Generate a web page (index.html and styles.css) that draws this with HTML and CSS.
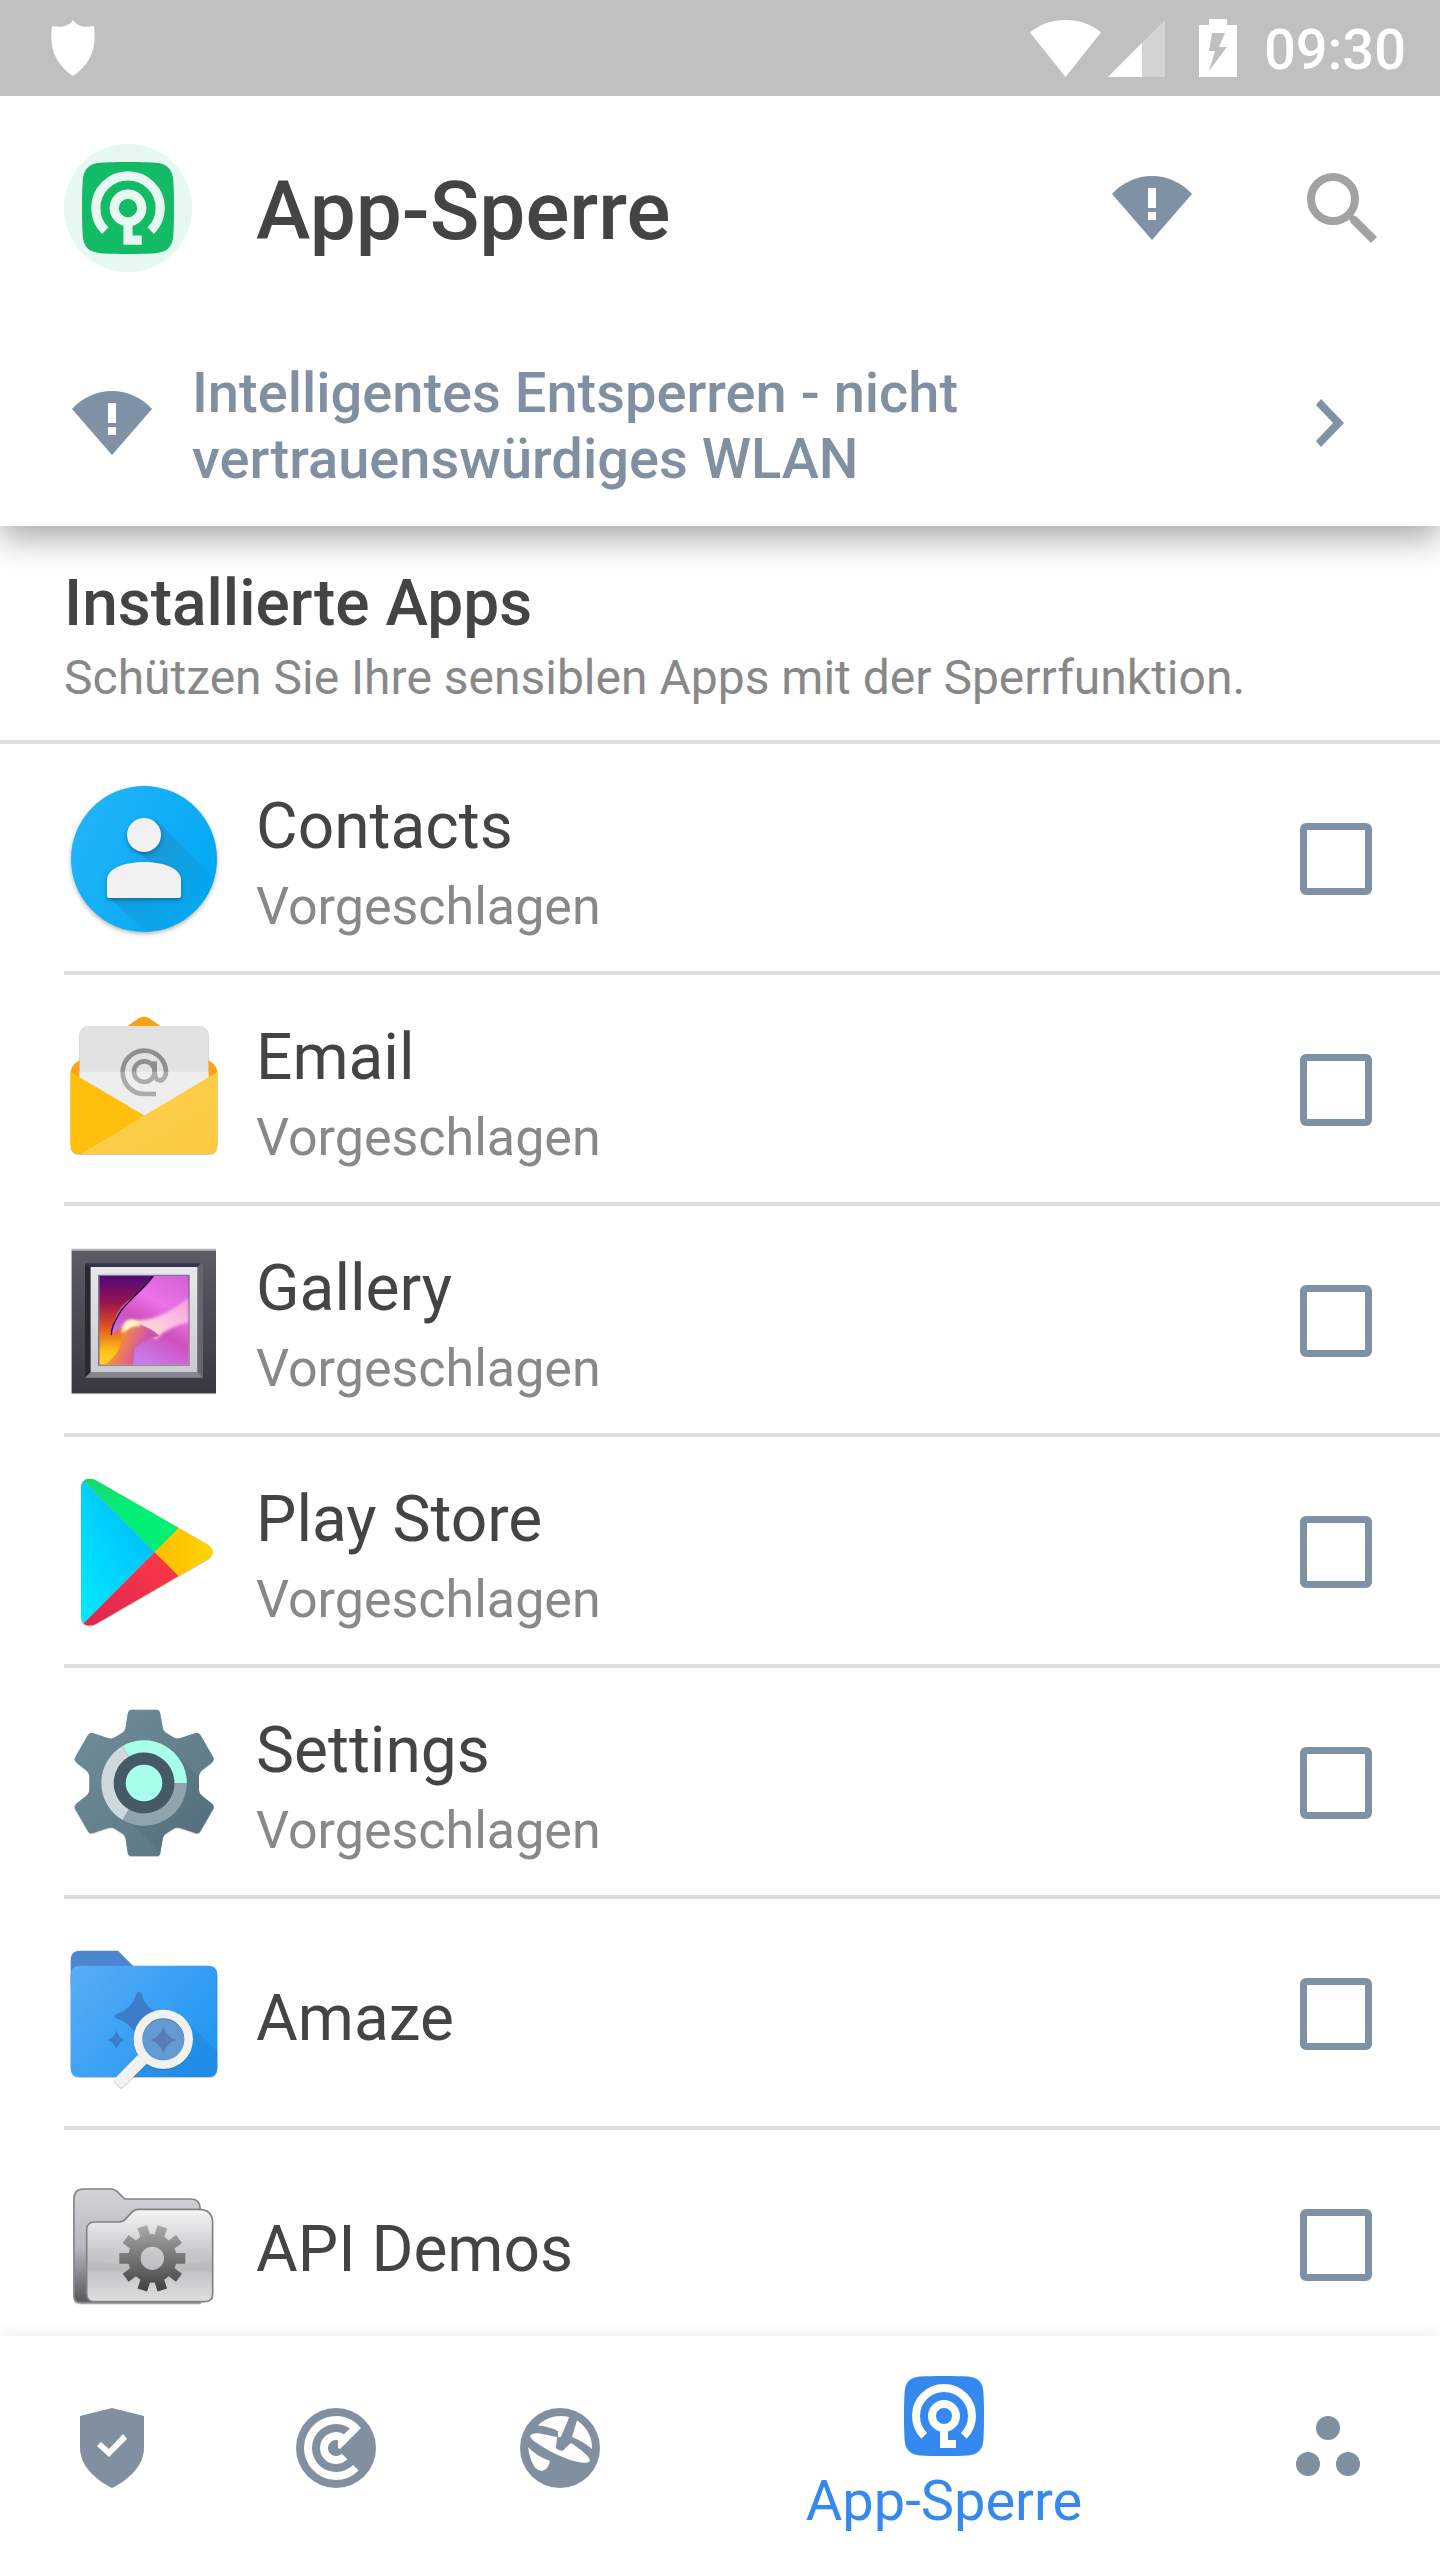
FILE: index.html
```html
<!DOCTYPE html>
<html lang="de">
<head>
  <meta charset="UTF-8" />
  <meta name="viewport" content="width=device-width, initial-scale=1.0"/>
  <title>App-Sperre</title>
  <link rel="stylesheet" href="styles.css">
</head>
<body>
  <svg class="defs" aria-hidden="true">
    <symbol id="wifi-alert" viewBox="0 0 80 64">
      <path fill="#7f91a5" d="M0 18C10 7 24 0 40 0s30 7 40 18L40 64z"/>
      <path fill="#fff" d="M36 12h8v20h-8zM36 36h8v8h-8z"/>
    </symbol>
    <symbol id="lock-key" viewBox="0 0 80 80">
      <path fill="currentColor" d="M16 .6C28 -.2 52 -.2 64 .6C74 1.5 78.500 6 79.400 16C80.200 28 80.200 52 79.400 64C78.500 74 74 78.500 64 79.400C52 80.200 28 80.200 16 79.400C6 78.500 1.500 74 .6 64C-.2 52 -.2 28 .6 16C1.500 6 6 1.500 16 .6z"/>
      <path class="key" fill="none" stroke-width="8" d="M20.200 59.800A28 28 0 1 1 59.800 59.800"/>
      <circle class="key" fill="none" stroke-width="8" cx="40" cy="40" r="12"/>
      <path class="key" fill="none" stroke-width="8" d="M40 54v14h12"/>
    </symbol>
  </svg>

  <div class="status-bar">
    <svg class="status-shield" viewBox="0 0 44 56"><path fill="#fff" d="M22 0C26 6 32 8 43 6C46 30 39 44 22 56C5 44 -2 30 1 6C12 8 18 6 22 0z"/></svg>
    <svg class="status-wifi" viewBox="0 0 71 57"><path fill="#fff" d="M0 12.500C10 4 22 0 35.500 0S61 4 71 12.500L35.500 57z"/></svg>
    <svg class="status-signal" viewBox="0 0 57 57"><path fill="#fff" fill-opacity=".3" d="M57 0v57H0z"/><path fill="#fff" d="M34 23v34H0z"/></svg>
    <svg class="status-battery" viewBox="0 0 38 58"><path fill="#fff" fill-rule="evenodd" d="M10 0h18v6h10v52H0V6h10zM13 14l-3 18h6l-6 20 18-24h-8l6-14z"/></svg>
    <span class="time">09:30</span>
  </div>

  <header class="header">
    <div class="toolbar">
      <span class="logo"><svg viewBox="0 0 80 80"><use href="#lock-key"/></svg></span>
      <h1>App-Sperre</h1>
      <button type="button" class="icon-button" aria-label="WLAN"><svg class="wifi-icon"><use href="#wifi-alert"/></svg></button>
      <button type="button" class="icon-button" aria-label="Suchen">
        <svg class="search-icon" viewBox="0 0 70 70"><circle cx="26" cy="26" r="22" fill="none" stroke="#a2a2a2" stroke-width="8"/><path fill="#a2a2a2" d="M42 46l4-4 4 2 20 20-6 6-20-20z"/></svg>
      </button>
    </div>
    <button type="button" class="unlock">
      <svg class="wifi-icon"><use href="#wifi-alert"/></svg>
      <span class="unlock-text">Intelligentes Entsperren - nicht vertrauenswürdiges WLAN</span>
      <svg class="chevron" viewBox="0 0 28 48"><path fill="#7f91a5" d="M5 0l23 24L5 48l-5-6 17-18L0 6z"/></svg>
    </button>
  </header>

  <main class="content">
    <div class="section-head">
      <h2>Installierte Apps</h2>
      <p>Schützen Sie Ihre sensiblen Apps mit der Sperrfunktion.</p>
    </div>

    <ul class="app-list">
      <li>
        <label class="app">
          <svg class="app-icon" viewBox="0 0 160 160">
            <defs>
              <linearGradient id="c1" x1="0" y1="0" x2="1" y2=".5"><stop offset="0" stop-color="#26b5f8"/><stop offset="1" stop-color="#03a9f4"/></linearGradient>
              <linearGradient id="c2" x1="0" y1="0" x2="1" y2="1"><stop offset=".3" stop-color="#1b93cf" stop-opacity=".8"/><stop offset="1" stop-color="#03a4ee" stop-opacity="0"/></linearGradient>
              <clipPath id="c3"><circle cx="80" cy="80" r="73"/></clipPath>
            </defs>
            <circle cx="80" cy="80" r="73" fill="url(#c1)" class="drop"/>
            <path clip-path="url(#c3)" fill="url(#c2)" d="M92 41l65 65-67 54-46-43 46-32-23-16z"/>
            <g fill="#f1f1f1" class="drop"><circle cx="80" cy="56" r="17"/><path d="M43 101c0-12 18-18 37-18s37 6 37 18v16q0 2-2 2H45q-2 0-2-2z"/></g>
          </svg>
          <span class="app-text"><span class="name">Contacts</span><span class="hint">Vorgeschlagen</span></span>
          <input type="checkbox">
        </label>
      </li>
      <li>
        <label class="app">
          <svg class="app-icon" viewBox="42 30 480 480">
            <defs><linearGradient id="e1" x1="0" y1="0" x2="1" y2="1"><stop offset="0" stop-color="#ffd04c"/><stop offset="1" stop-color="#fcca42"/></linearGradient></defs>
            <path class="drop" fill="#ff9f14" d="M62 220q0-22 22-36L264 56q18-12 36 0l180 128q22 14 22 36v216q0 26-26 26H88q-26 0-26-26z"/>
            <path fill="#e2e2e2" class="drop" d="M88 106q0-28 28-28h332q28 0 28 28v200H88z"/>
            <path fill="#eee" d="M88 215h388v140H88z"/>
            <g fill="none" stroke="#8f8f8f" stroke-width="14"><circle cx="283" cy="215" r="31"/><path d="M314 184v33c0 35 34 30 34-2a65 65 0 1 0-65 67h35"/></g>
            <path fill="#eee" opacity=".3" d="M200 215h170v90H200z"/>
            <path fill="#ffbf0c" d="M62 216l222 131L92 461H88q-26 0-26-26z"/>
            <path fill="url(#e1)" d="M502 216v220q0 26-26 26H92L282 347z"/>
          </svg>
          <span class="app-text"><span class="name">Email</span><span class="hint">Vorgeschlagen</span></span>
          <input type="checkbox">
        </label>
      </li>
      <li>
        <label class="app">
          <svg class="app-icon" viewBox="42 31 480 480">
            <defs>
              <linearGradient id="g1" x1="0" y1="0" x2="0" y2="1"><stop offset="0" stop-color="#5c5c66"/><stop offset="1" stop-color="#383842"/></linearGradient>
              <linearGradient id="g2" x1="0" y1="0" x2="0" y2="1"><stop offset="0" stop-color="#e8e8ec"/><stop offset="1" stop-color="#c9c9d2"/></linearGradient>
              <linearGradient id="g3" x1="0" y1="0" x2="0" y2="1"><stop offset="0" stop-color="#500a78"/><stop offset=".3" stop-color="#96144e"/><stop offset=".55" stop-color="#e04a24"/><stop offset=".85" stop-color="#ffc414"/><stop offset="1" stop-color="#ffd32c"/></linearGradient>
              <linearGradient id="g4" x1="1" y1="0" x2=".5" y2="1"><stop offset="0" stop-color="#ce62d4"/><stop offset=".4" stop-color="#ec72e8"/><stop offset=".65" stop-color="#d050bd"/><stop offset="1" stop-color="#c67bea"/></linearGradient>
              <linearGradient id="g5" x1="1" y1="0" x2="0" y2="1"><stop offset="0" stop-color="#f7a0dc"/><stop offset=".5" stop-color="#ffc4e2"/><stop offset="1" stop-color="#fff2ba"/></linearGradient>
              <linearGradient id="g6" x1="0" y1="0" x2="1" y2=".3"><stop offset="0" stop-color="#ffb229"/><stop offset=".4" stop-color="#f5873f"/><stop offset=".8" stop-color="#ce55af"/></linearGradient>
              <clipPath id="g7"><path d="M148 136h268v266H148z"/></clipPath>
              <filter id="g8"><feGaussianBlur stdDeviation="5"/></filter>
            </defs>
            <path class="drop" fill="url(#g1)" d="M65 58h433v430H65z"/>
            <path fill="#b7b7b8" d="M65 54h433v6H65z"/>
            <path fill="#29292f" d="M105 98l17 12v315l-17 16z"/><path fill="#34344c" d="M105 98h347l-10 11H122z"/><path fill="#65656e" d="M459 98v343l-17-15V109z"/><path fill="#85858b" d="M122 425h321l16 16H105z"/>
            <path fill="url(#g2)" d="M122 109h320v316H122z"/>
            <path fill="#84758c" d="M144 132h275v273H144z"/>
            <g clip-path="url(#g7)">
              <path fill="url(#g3)" d="M148 136h268v266H148z"/>
              <path fill="url(#g4)" d="M310 136h106v266H250v-90l-36-20-28 20c5-60 24-85 52-105 40-30 55-53 72-71z"/>
              <path filter="url(#g8)" fill="url(#g5)" d="M416 200v75q-60 12-100 50l-47-45-50 25c5-25 15-42 48-36 55-2 105-30 149-69z"/>
              <path fill="url(#g6)" d="M216 316q30-40 58-32t55 32q-40 5-75 38l-4 50h-91q52-28 57-88z"/>
              <path filter="url(#g8)" fill="#fff4c0" d="M213 310q5-45 30-43 25 4 30 20-30-5-60 23z"/>
              <path fill="none" stroke="#2b0836" stroke-width="4" d="M310 136c-36 48-84 80-102 112-17 31-24 44-24 65"/>
            </g>
          </svg>
          <span class="app-text"><span class="name">Gallery</span><span class="hint">Vorgeschlagen</span></span>
          <input type="checkbox">
        </label>
      </li>
      <li>
        <label class="app">
          <svg class="app-icon" viewBox="42 36 480 480">
            <defs>
              <linearGradient id="p1" x1="1" y1="0" x2="0" y2="1"><stop offset="0" stop-color="#00b2ff"/><stop offset="1" stop-color="#00edff"/></linearGradient>
              <linearGradient id="p2" x1="0" y1="0" x2="1" y2="0"><stop offset="0" stop-color="#ffbc00"/><stop offset="1" stop-color="#ffd900"/></linearGradient>
              <linearGradient id="p3" x1="1" y1="0" x2="0" y2="1"><stop offset="0" stop-color="#ff3a44"/><stop offset="1" stop-color="#dc2456"/></linearGradient>
              <linearGradient id="p4" x1="0" y1="0" x2="1" y2="1"><stop offset="0" stop-color="#17d574"/><stop offset=".5" stop-color="#00f076"/></linearGradient>
              <clipPath id="p5"><path d="M93 84C93 60 112 50 136 60L474 254Q502 275 474 297L136 493C112 502 93 494 93 468z"/></clipPath>
            </defs>
            <path class="drop" fill="#e8c51c" d="M93 84C93 60 112 50 136 60L474 254Q502 275 474 297L136 493C112 502 93 494 93 468z"/>
            <g clip-path="url(#p5)">
              <path fill="url(#p4)" d="M93 55L314 276l72-72L120 45z"/>
              <path fill="url(#p3)" d="M93 497L314 276l72 72-240 160z"/>
              <path fill="url(#p2)" d="M314 276l72-72 124 72-124 72z"/>
              <path fill="url(#p1)" d="M90 52l224 224L90 500z"/>
            </g>
          </svg>
          <span class="app-text"><span class="name">Play Store</span><span class="hint">Vorgeschlagen</span></span>
          <input type="checkbox">
        </label>
      </li>
      <li>
        <label class="app">
          <svg class="app-icon" viewBox="42 39 480 480">
            <defs><linearGradient id="s1" x1="0" y1="0" x2="1" y2="1"><stop offset="0" stop-color="#708d99"/><stop offset="1" stop-color="#587582"/></linearGradient></defs>
            <path class="drop" fill="url(#s1)" d="M246 59h72q12 0 13 12l7 41q2 12 13 18l18 11q11 7 22 3l43-14q12-5 18 6l37 64q6 10-4 18l-28 22q-10 8-10 20v38q0 12 10 20l28 22q10 8 4 18l-37 64q-6 11-18 6l-43-14q-11-4-22 3l-18 11q-11 6-13 18l-7 42q-1 10-13 10h-72q-11 0-13-10l-6-42q-2-12-13-18l-18-11q-11-7-22-3l-43 14q-12 5-18-6l-37-64q-6-10 4-18l28-22q10-8 10-20v-38q0-12-10-20l-28-22q-10-8-4-18l37-64q6-11 18-6l43 14q11 4 22-3l18-11q11-6 13-18l6-41q2-12 13-12z"/>
            <path fill="#415b67" opacity=".2" d="M374 188l73 73v38q0 12 10 20l28 22q8 8 4 18l-37 64q-6 11-18 6l-43-14q-11-4-22 3l-18 11q-11 6-13 18l-6 40-114-112z"/>
            <circle cx="282" cy="279" r="110" fill="#455a64"/>
            <g fill="none" stroke-width="37">
              <path stroke="#a7ffeb" d="M227 184A110 110 0 0 1 392 279"/>
              <path stroke="#90a4ae" d="M392 279A110 110 0 0 1 227 374"/>
              <path stroke="#cfd8dc" d="M227 374A110 110 0 0 1 227 184"/>
            </g>
            <circle cx="282" cy="279" r="55" fill="#a7ffeb"/>
          </svg>
          <span class="app-text"><span class="name">Settings</span><span class="hint">Vorgeschlagen</span></span>
          <input type="checkbox">
        </label>
      </li>
      <li>
        <label class="app">
          <svg class="app-icon" viewBox="42 12 480 480">
            <defs><linearGradient id="a1" x1="0" y1="0" x2="1" y2=".6"><stop offset="0" stop-color="#59adf6"/><stop offset="1" stop-color="#2497f3"/></linearGradient></defs>
            <path fill="#4b86cf" d="M62 90q0-28 28-28h114l54 54v50H62z"/>
            <path class="drop" fill="url(#a1)" d="M62 135q0-28 28-28h384q28 0 28 28v278q0 28-28 28H90q-28 0-28-28z"/>
            <path fill="#1976c9" opacity=".3" d="M402 265l100 100v48q0 28-28 28H246l44-44z"/>
            <path fill="#3b7ccb" d="M259 191q8-12 16 0 11 45 53 60 14 8 0 15-43 14-53 57-8 14-16 0-12-45-58-57-14-7 0-15 46-15 58-60zM199 301q6 24 28 29-22 5-28 28-6-23-28-28 22-5 28-29z"/>
            <circle cx="340" cy="328" r="62" fill="#6599d2"/>
            <path fill="#577bb5" d="M340 290q9 32 40 40-31 8-40 40-9-32-40-40 31-8 40-40z"/>
            <g class="drop"><circle cx="340" cy="328" r="76" fill="none" stroke="#f1f1f1" stroke-width="26"/><path fill="#f1f1f1" d="M264 374l26 28-70 68q-6 6-12 0l-13-13q-5-6 0-12z"/></g>
          </svg>
          <span class="app-text"><span class="name">Amaze</span></span>
          <input type="checkbox">
        </label>
      </li>
      <li>
        <label class="app">
          <svg class="app-icon" viewBox="42 15 480 480">
            <defs>
              <linearGradient id="d1" x1="0" y1="0" x2="0" y2="1"><stop offset="0" stop-color="#d1d3d5"/><stop offset=".5" stop-color="#b9bac0"/><stop offset="1" stop-color="#555759"/></linearGradient>
              <linearGradient id="d2" x1="0" y1="0" x2="0" y2="1"><stop offset="0" stop-color="#f3f4f4"/><stop offset=".5" stop-color="#c5c6c8"/><stop offset=".65" stop-color="#c1c1c3"/><stop offset="1" stop-color="#e0e0e1"/></linearGradient>
              <linearGradient id="d3" x1="0" y1="195" x2="0" y2="395" gradientUnits="userSpaceOnUse"><stop offset="0" stop-color="#aaa"/><stop offset="1" stop-color="#404040"/></linearGradient>
            </defs>
            <path class="drop" fill="url(#d1)" stroke="#858789" stroke-width="5" d="M72 118q0-31 28-31h82q12 0 20 8l22 22h198q28 0 28 28v283H92q-20 0-20-20z"/>
            <path fill="url(#d2)" stroke="#808284" stroke-width="5" d="M110 210q0-24 24-24h72q14 0 20-8l18-20q8-10 22-10h180q42 0 42 42v211q0 24-24 24H134q-24 0-24-24z"/>
            <path fill="#a9aaad" opacity=".25" d="M113 300q190 34 372 0v34H113z"/>
            <g fill="none" stroke="url(#d3)">
              <circle cx="307" cy="295" r="54" stroke-width="38"/>
              <path stroke-width="30" stroke-linejoin="round" d="M364 336l23 17M328 362l9 28M286 362l-9 28M250 336l-23 17M250 254l-23-17M286 228l-9-28M328 228l9-28M364 254l23-17"/>
            </g>
            <path fill="url(#d3)" d="M375 279h31v32h-31zM208 279h31v32h-31z"/>
          </svg>
          <span class="app-text"><span class="name">API Demos</span></span>
          <input type="checkbox">
        </label>
      </li>
    </ul>
  </main>

  <nav class="tabs">
    <a href="#" class="tab" aria-label="Schutz">
      <svg viewBox="0 0 80 80"><path fill="#8090a0" d="M40 0l32 8v32C72 58 56 72 40 80 24 72 8 58 8 40V8z"/><path fill="#fff" d="M25 38l4-4 8 7 14-15 4 5-18 18z"/></svg>
    </a>
    <a href="#" class="tab" aria-label="Scan">
      <svg viewBox="-40 -40 80 80"><circle r="40" fill="#8090a0"/><path fill="#fff" d="M25 -20L4 1 2 0V-7.700A8 8 0 1 0 5.700 5.700L11.300 11.300A16 16 0 1 1 8 -13.800L14 -19.500A24 24 0 1 0 17 17L22.600 22.600A32 32 0 1 1 25 -20z"/></svg>
    </a>
    <a href="#" class="tab" aria-label="Web-Schutz">
      <svg viewBox="-40 -40 80 80"><circle r="40" fill="#8090a0"/><path fill="#fff" d="M-22 -22.500A32 32 0 0 1 9 -31L4 -13Q2 -10 -2 -11V-17Q-12 -22 -22 -22.500zM17 -27.500A32 32 0 0 1 32 1Q24 -6 12 -11zM-30 -12C-27 -18 -14 -13 -3 -11L-4 0 3 2 11 -5C20 1 30 8 30 13 26 18 6 12 -12 2-22 -4 -30 -9 -30 -12zM-32 -1Q-24 8 -10 13-12 22 -18 23-25 23 -29 12-31 6 -32 -1z"/><path fill="#8090a0" d="M10 -32l7 3L4 2Q0 4 -4 0z"/></svg>
    </a>
    <a href="#" class="tab active" aria-current="page">
      <svg viewBox="0 0 80 80"><use href="#lock-key"/></svg>
      <span>App-Sperre</span>
    </a>
    <a href="#" class="tab" aria-label="Mehr">
      <svg viewBox="0 0 80 80"><g fill="#8090a0"><circle cx="40" cy="20" r="12"/><circle cx="20" cy="56" r="12"/><circle cx="60" cy="56" r="12"/></g></svg>
    </a>
  </nav>
</body>
</html>
```
FILE: styles.css
```css
* {
  box-sizing: border-box;
}
body {
  display: flex;
  flex-direction: column;
  height: 100vh;
  margin: 0;
  background: #fff;
  color: #444;
  font-family: Roboto, "Liberation Sans", sans-serif;
}
h1, h2, p, ul {
  margin: 0;
  padding: 0;
}
h1, h2 {
  font-weight: 500;
}
button {
  border: 0;
  padding: 0;
  background: none;
  font: inherit;
}
svg {
  display: block;
  flex: none;
}
.defs {
  position: absolute;
  width: 0;
  height: 0;
}
.status-bar {
  position: relative;
  z-index: 2;
  display: flex;
  align-items: center;
  flex: none;
  height: 96px;
  padding: 0 34px 0 51px;
  background: #c0c0c0;
  color: #fff;
}
.status-shield {
  width: 44px;
  height: 56px;
  margin-right: auto;
}
.status-wifi {
  width: 71px;
  height: 57px;
}
.status-signal {
  width: 57px;
  height: 57px;
  margin-left: 7px;
}
.status-battery {
  width: 38px;
  height: 58px;
  margin: 0 27px 0 34px;
}
.time {
  padding-top: 4px;
  font-size: 56px;
  font-weight: 500;
  line-height: 66px;
}
.header {
  position: relative;
  z-index: 1;
  flex: none;
  background: #fff;
  box-shadow: 0 12px 32px rgba(0, 0, 0, 0.35);
}
.toolbar {
  display: flex;
  align-items: center;
  height: 224px;
  padding: 0 34px 0 64px;
}
.logo {
  --key: #e6f8f0;
  display: flex;
  align-items: center;
  justify-content: center;
  width: 128px;
  height: 128px;
  border-radius: 50%;
  background: #e6f8f0;
  color: #13bb66;
}
.logo svg {
  width: 92px;
  height: 92px;
}
.key {
  stroke: var(--key, #fff);
}
h1 {
  flex: 1;
  margin-left: 64px;
  padding-top: 6px;
  font-size: 82px;
  line-height: 94px;
}
.icon-button {
  display: flex;
  align-items: center;
  justify-content: center;
  width: 192px;
  height: 192px;
}
.icon-button + .icon-button {
  width: 128px;
  margin-left: 30px;
}
.wifi-icon {
  width: 80px;
  height: 64px;
}
.search-icon {
  width: 70px;
  height: 70px;
}
.unlock {
  display: flex;
  align-items: center;
  width: 100%;
  height: 206px;
  padding: 0 96px 0 72px;
  color: #8090a0;
  font-size: 56px;
  font-weight: 500;
  line-height: 66px;
  text-align: left;
}
.unlock-text {
  flex: 1;
  max-width: 880px;
  margin: 0 auto 0 40px;
  padding-top: 6px;
}
.chevron {
  width: 28px;
  height: 48px;
}
.content {
  flex: 1;
  min-height: 0;
  overflow: hidden;
}
.section-head {
  height: 218px;
  padding: 40px 64px 0;
  border-bottom: 4px solid #ddd;
}
h2 {
  font-size: 64px;
  line-height: 75px;
}
.section-head p {
  margin-top: 9px;
  color: #888;
  font-size: 48px;
  line-height: 56px;
}
.app-list {
  padding-left: 64px;
  list-style: none;
}
.app {
  display: flex;
  align-items: center;
  height: 231px;
  padding: 3px 68px 0 0;
  border-bottom: 4px solid #ddd;
}
.app-icon {
  width: 160px;
  height: 160px;
}
.drop {
  filter: drop-shadow(0 2px 2px rgba(0, 0, 0, 0.3));
}
.app-text {
  display: flex;
  flex: 1;
  flex-direction: column;
  gap: 12px;
  margin-left: 32px;
  padding-top: 8px;
}
.name {
  font-size: 64px;
  line-height: 75px;
}
.hint {
  color: #888;
  font-size: 52px;
  line-height: 61px;
}
input[type="checkbox"] {
  width: 72px;
  height: 72px;
  margin: 0;
  border: 7px solid #7f91a5;
  border-radius: 6px;
  background: #fff;
  appearance: none;
}
input[type="checkbox"]:checked {
  background: #7f91a5;
}
.tabs {
  position: relative;
  z-index: 1;
  display: flex;
  flex: none;
  height: 224px;
  background: #fff;
  box-shadow: 0 0 16px rgba(0, 0, 0, 0.1);
}
.tab {
  display: flex;
  flex: 224 1 0;
  flex-direction: column;
  align-items: center;
  justify-content: center;
  color: #3589ee;
  font-size: 56px;
  line-height: 66px;
  text-decoration: none;
}
.tab svg {
  width: 80px;
  height: 80px;
}
.tab.active {
  flex-grow: 544;
  gap: 12px;
  padding-top: 14px;
}
```
